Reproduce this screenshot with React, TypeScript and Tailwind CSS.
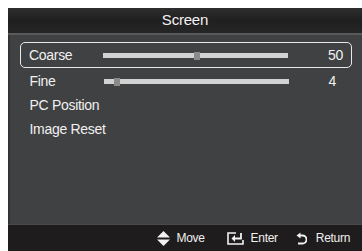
import React from "react";

function Slider({ pos }: { pos: number }) {
  return (
    <div className="relative w-[185px] h-[5px] bg-[#d2d2d2]">
      <div
        className="absolute top-[-1px] w-[6px] h-[8px] bg-[#8a8a8a]"
        style={{ left: pos }}
      />
    </div>
  );
}

function UpDown() {
  return (
    <svg width="13" height="15" viewBox="0 0 13 15">
      <polygon points="6.5,0 13,6.5 0,6.5" fill="#f2f2f2" />
      <polygon points="0,8.5 13,8.5 6.5,15" fill="#f2f2f2" />
    </svg>
  );
}

function EnterIcon() {
  return (
    <svg width="17" height="13" viewBox="0 0 17 13">
      <path d="M9 1H1v11h15V8" fill="none" stroke="#f2f2f2" strokeWidth="1.6" />
      <path d="M14 1v5.5H8" fill="none" stroke="#f2f2f2" strokeWidth="1.8" />
      <polygon points="8,3 4.5,6.5 8,10" fill="#f2f2f2" />
    </svg>
  );
}

function ReturnIcon() {
  return (
    <svg width="11" height="13" viewBox="0 0 11 13">
      <path d="M4 3.5h2.5a4 4 0 0 1 0 8H2" fill="none" stroke="#f2f2f2" strokeWidth="1.8" />
      <polygon points="0.5,3.5 4.5,0.5 4.5,6.5" fill="#f2f2f2" />
    </svg>
  );
}

export default function App() {
  return (
    <div
      className="w-[362px] h-[251px] bg-white pt-[8px] pl-[8px] overflow-hidden"
      style={{ fontFamily: '"Liberation Sans", Arial, sans-serif' }}
    >
      <div className="w-[354px] h-[243px] flex flex-col">
        <div className="h-[25px] bg-gradient-to-b from-[#2e2e2e] via-[#1f1f1f] to-[#262626] flex items-center justify-center text-[15px] text-[#f2f2f2] tracking-[-0.2px]">
          Screen
        </div>
        <div className="h-[2px] bg-[#5a5a5a]" />
        <div className="flex-1 bg-[#404143] border-l-2 border-[#333436] pl-[10px] pr-[10px] pt-[7px] text-[14px] text-[#f0f0f0] tracking-[-0.3px]">
          <div className="h-[26px] border-[1.5px] border-[#e8e8e8] rounded-[5px] flex items-center pl-[8px]">
            <div className="w-[74px]">Coarse</div>
            <Slider pos={91} />
            <div className="ml-[40px]">50</div>
          </div>
          <div className="mt-[1px] h-[24px] flex items-center pl-[9.5px]">
            <div className="w-[74px]">Fine</div>
            <Slider pos={10} />
            <div className="ml-[40px]">4</div>
          </div>
          <div className="h-[24px] flex items-center pl-[9.5px]">PC Position</div>
          <div className="h-[24px] flex items-center pl-[9.5px]">Image Reset</div>
        </div>
        <div className="h-[1px] bg-[#4a4a4a]" />
        <div className="h-[26px] bg-[#1f1c1d] flex items-center justify-end pr-[12px] text-[12px] text-[#f0f0f0] tracking-[-0.3px]">
          <UpDown />
          <span className="ml-[6px]">Move</span>
          <span className="ml-[22px] flex items-center">
            <EnterIcon />
          </span>
          <span className="ml-[7px]">Enter</span>
          <span className="ml-[18px] flex items-center">
            <ReturnIcon />
          </span>
          <span className="ml-[9px]">Return</span>
        </div>
      </div>
    </div>
  );
}
